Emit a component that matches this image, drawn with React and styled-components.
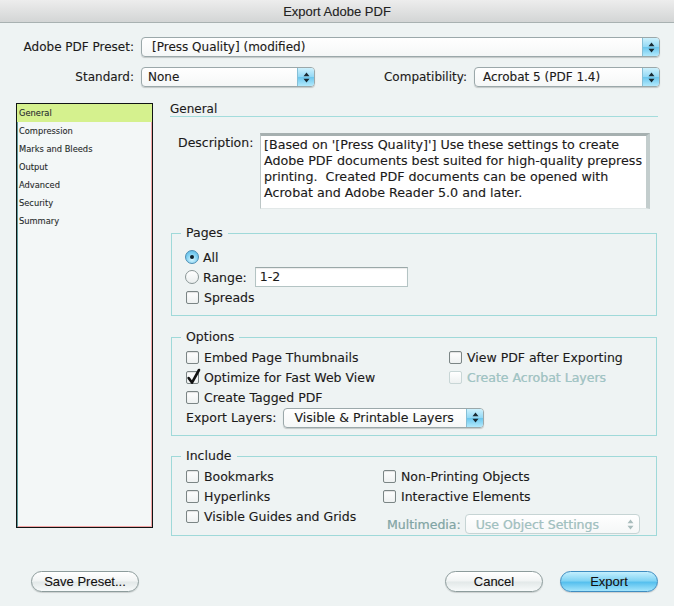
import React from "react";
import styled, { createGlobalStyle } from "styled-components";

const GlobalStyle = createGlobalStyle`
  html, body {
    margin: 0;
    padding: 0;
    background: #eef3f3;
  }
  body {
    font-family: "DejaVu Sans", "Noto Sans", sans-serif;
  }
`;

const aqua = "linear-gradient(#cdf1fd 0%, #94d9f5 48%, #6cc7ee 52%, #b2e9fc 100%)";

const Window = styled.div`
  width: 674px;
  height: 606px;
  display: flex;
  flex-direction: column;
  background: #eef3f3;
  color: #1b1b1b;
  font-size: 12px;
  overflow: hidden;
  text-shadow: 0.5px 0 0 rgba(220, 90, 90, 0.22), -0.5px 0 0 rgba(60, 170, 170, 0.22);
`;

const TitleBar = styled.div`
  height: 22px;
  flex: none;
  display: flex;
  align-items: center;
  justify-content: center;
  background: linear-gradient(#ededed, #d3d5d5);
  border-bottom: 1px solid #a8b1b1;
  font-family: "Liberation Sans", Arial, sans-serif;
  font-size: 13px;
  color: #222;
`;

const Top = styled.div`
  display: flex;
  flex-direction: column;
  gap: 10px;
  padding: 14px 14px 0 16px;
`;

const FieldRow = styled.div`
  display: flex;
  align-items: center;
  height: 20px;
`;

const Label = styled.span`
  flex: none;
  width: ${(p) => (p.$w ? `${p.$w}px` : "auto")};
  text-align: right;
  margin-right: ${(p) => (p.$gap != null ? p.$gap : 7)}px;
  white-space: nowrap;
  color: ${(p) => (p.$disabled ? "#7fa7a7" : "inherit")};
`;

const Spacer = styled.div`
  flex: 1;
`;

const PopupBox = styled.div`
  display: flex;
  align-items: center;
  box-sizing: border-box;
  height: 20px;
  flex: ${(p) => (p.$w ? "none" : 1)};
  width: ${(p) => (p.$w ? `${p.$w}px` : "auto")};
  border: 1px solid ${(p) => (p.$disabled ? "#c6d4d4" : "#9ba8aa")};
  border-radius: 4px;
  background: linear-gradient(#ffffff, #f5f7f7);
  box-shadow: ${(p) => (p.$disabled ? "none" : "0 1px 1px rgba(0,0,0,0.18)")};
  color: ${(p) => (p.$disabled ? "#9fc3c3" : "inherit")};
  overflow: hidden;
`;

const PopupText = styled.span`
  flex: 1;
  padding-left: ${(p) => p.$pl || 10}px;
  white-space: nowrap;
  overflow: hidden;
`;

const PopupArrows = styled.span`
  flex: none;
  align-self: stretch;
  width: 16px;
  display: flex;
  align-items: center;
  justify-content: center;
  background: ${(p) => (p.$disabled ? "transparent" : aqua)};
  border-left: 1px solid ${(p) => (p.$disabled ? "transparent" : "#86bfd6")};
`;

const Arrows = ({ color }) => (
  <svg width="7" height="11" viewBox="0 0 7 11">
    <path d="M3.5 0.5 L6.5 4.2 H0.5 Z M3.5 10.5 L6.5 6.8 H0.5 Z" fill={color} />
  </svg>
);

const Popup = ({ children, w, disabled, pl }) => (
  <PopupBox $w={w} $disabled={disabled}>
    <PopupText $pl={pl}>{children}</PopupText>
    <PopupArrows $disabled={disabled}>
      <Arrows color={disabled ? "#a9bcbc" : "#1a2a33"} />
    </PopupArrows>
  </PopupBox>
);

const Main = styled.div`
  display: flex;
  gap: 17px;
  padding: 16px 16px 0 16px;
`;

const SideList = styled.div`
  flex: none;
  width: 137px;
  height: 425px;
  box-sizing: border-box;
  border: 1px solid #101414;
  background: #f3f7f7;
  box-shadow: inset 1px 0 0 #5f9a9a, inset -1px -1px 0 #f2a4a4;
`;

const ListItem = styled.div`
  height: 18px;
  line-height: 18px;
  padding-left: 2px;
  font-size: 8.3px;
  color: #1c2a2a;
  background: ${(p) => (p.$active ? "#d5f18e" : "transparent")};
`;

const Panel = styled.div`
  flex: 1;
  display: flex;
  flex-direction: column;
  font-size: 12.5px;
`;

const PanelHeader = styled.div`
  height: 13px;
  line-height: 13px;
  font-size: 12px;
  border-bottom: 1px solid #a3dcdc;
`;

const DescRow = styled.div`
  display: flex;
  margin-top: 16px;
`;

const DescLabel = styled.div`
  flex: none;
  width: 82px;
  padding-left: 8px;
  padding-top: 2px;
  line-height: 16px;
`;

const DescBox = styled.div`
  width: 390px;
  height: 76px;
  box-sizing: border-box;
  background: #fff;
  border-top: 3px solid #a6b0b0;
  border-left: 1px solid #bcc6c6;
  border-right: 4px solid #c3cdcd;
  border-bottom: 1px solid #e2e8e8;
  padding: 1px 0 0 3px;
  line-height: 16px;
  font-size: 12.7px;
  white-space: nowrap;
`;

const Group = styled.fieldset`
  margin: ${(p) => p.$mt}px 1px 0 1px;
  padding: ${(p) => p.$pt}px 14px ${(p) => p.$pb}px 14px;
  border: 1px solid #9fd9d9;
  min-width: 0;
`;

const Legend = styled.legend`
  padding: 0 5px;
  margin-left: -5px;
  line-height: 16px;
  font-size: 12.5px;
`;

const Stack = styled.div`
  display: flex;
  flex-direction: column;
`;

const Grid = styled.div`
  display: grid;
  grid-template-columns: ${(p) => p.$cols};
  grid-auto-rows: 20px;
`;

const Item = styled.div`
  display: flex;
  align-items: center;
  height: ${(p) => p.$h || 20}px;
  white-space: nowrap;
  grid-column: ${(p) => p.$span || "auto"};
  margin-top: ${(p) => p.$mt || 0}px;
  padding-left: ${(p) => p.$pl || 0}px;
  color: ${(p) => (p.$disabled ? "#9dc6c6" : "inherit")};
`;

const Box = styled.span`
  flex: none;
  width: 13px;
  height: 13px;
  box-sizing: border-box;
  margin-right: 5px;
  border: 1px solid ${(p) => (p.$disabled ? "#c8d6d6" : "#7b8585")};
  border-radius: 2px;
  background: linear-gradient(#ffffff, #eef1f1);
  box-shadow: ${(p) => (p.$disabled ? "none" : "inset 0 1px 1px rgba(0,0,0,0.12)")};
  svg {
    display: block;
    overflow: visible;
  }
`;

const Radio = styled.span`
  flex: none;
  width: 14px;
  height: 14px;
  box-sizing: border-box;
  margin: 0 4px 0 -1px;
  border-radius: 50%;
  display: flex;
  align-items: center;
  justify-content: center;
  border: 1px solid ${(p) => (p.$on ? "#4b8db3" : "#8a9696")};
  background: ${(p) =>
    p.$on
      ? "radial-gradient(circle at 50% 70%, #d8f6ff 0%, #7fd0f2 55%, #57b4e0 100%)"
      : "linear-gradient(#ffffff, #eaeeee)"};
  &::after {
    content: "";
    display: ${(p) => (p.$on ? "block" : "none")};
    width: 4px;
    height: 4px;
    border-radius: 50%;
    background: #10202a;
  }
`;

const Check = ({ label, checked, disabled }) => (
  <Item $disabled={disabled}>
    <Box $disabled={disabled}>
      {checked && (
        <svg width="13" height="13" viewBox="0 0 13 13">
          <path
            d="M1.6 6 L5 10.6 L12 -2"
            fill="none"
            stroke="#111"
            strokeWidth="2.6"
            strokeLinecap="round"
            strokeLinejoin="round"
          />
        </svg>
      )}
    </Box>
    {label}
  </Item>
);

const TextField = styled.div`
  width: 153px;
  height: 20px;
  box-sizing: border-box;
  margin-left: 8px;
  padding-left: 4px;
  line-height: 18px;
  background: #fff;
  border: 1px solid #b4c4c4;
  border-top-color: #9aa8a8;
  box-shadow: inset 0 1px 1px rgba(0, 0, 0, 0.08);
`;

const ButtonRow = styled.div`
  margin-top: auto;
  display: flex;
  align-items: center;
  gap: 17px;
  padding: 0 16px 14px 31px;
`;

const Button = styled.button`
  width: ${(p) => p.$w}px;
  height: 21px;
  padding: 0;
  border-radius: 11px;
  font-family: "Liberation Sans", Arial, sans-serif;
  font-size: 13px;
  color: #111;
  text-shadow: inherit;
  border: 1px solid ${(p) => (p.$primary ? "#3f8dc1" : "#8d9c9c")};
  background: ${(p) =>
    p.$primary
      ? "linear-gradient(#c4effe 0%, #82d4f4 45%, #57c0ee 55%, #a3e5fc 100%)"
      : "linear-gradient(#ffffff 0%, #f1f4f4 48%, #e2e8e8 52%, #f7fafa 100%)"};
  box-shadow: 0 1px 1px rgba(0, 0, 0, 0.15);
`;

const sections = ["General", "Compression", "Marks and Bleeds", "Output", "Advanced", "Security", "Summary"];

export default function App() {
  return (
    <>
      <GlobalStyle />
      <Window>
        <TitleBar>Export Adobe PDF</TitleBar>

        <Top>
          <FieldRow>
            <Label $w={118}>Adobe PDF Preset:</Label>
            <Popup>[Press Quality] (modified)</Popup>
          </FieldRow>
          <FieldRow>
            <Label $w={118}>Standard:</Label>
            <Popup w={174} pl={6}>None</Popup>
            <Spacer />
            <Label>Compatibility:</Label>
            <Popup w={186} pl={8}>Acrobat 5 (PDF 1.4)</Popup>
          </FieldRow>
        </Top>

        <Main>
          <SideList>
            {sections.map((s, i) => (
              <ListItem key={s} $active={i === 0}>
                {s}
              </ListItem>
            ))}
          </SideList>

          <Panel>
            <PanelHeader>General</PanelHeader>

            <DescRow>
              <DescLabel>Description:</DescLabel>
              <DescBox>
                [Based on '[Press Quality]'] Use these settings to create
                <br />
                Adobe PDF documents best suited for high-quality prepress
                <br />
                printing.&nbsp; Created PDF documents can be opened with
                <br />
                Acrobat and Adobe Reader 5.0 and later.
              </DescBox>
            </DescRow>

            <Group $mt={16} $pt={6} $pb={8}>
              <Legend>Pages</Legend>
              <Stack>
                <Item>
                  <Radio $on />
                  All
                </Item>
                <Item>
                  <Radio />
                  Range:
                  <TextField>1-2</TextField>
                </Item>
                <Check label="Spreads" />
              </Stack>
            </Group>

            <Group $mt={13} $pt={2} $pb={8}>
              <Legend>Options</Legend>
              <Grid $cols="263px 1fr">
                <Check label="Embed Page Thumbnails" />
                <Check label="View PDF after Exporting" />
                <Check label="Optimize for Fast Web View" checked />
                <Check label="Create Acrobat Layers" disabled />
                <Check label="Create Tagged PDF" />
                <span />
                <Item $span="1 / 3" $h={21}>
                  <Label $gap={7}>Export Layers:</Label>
                  <Popup w={201}>Visible &amp; Printable Layers</Popup>
                </Item>
              </Grid>
            </Group>

            <Group $mt={12} $pt={2} $pb={9}>
              <Legend>Include</Legend>
              <Grid $cols="197px 1fr">
                <Check label="Bookmarks" />
                <Check label="Non-Printing Objects" />
                <Check label="Hyperlinks" />
                <Check label="Interactive Elements" />
                <Check label="Visible Guides and Grids" />
                <Item $mt={8} $pl={4}>
                  <Label $disabled $gap={4}>Multimedia:</Label>
                  <Popup w={175} disabled>Use Object Settings</Popup>
                </Item>
              </Grid>
            </Group>
          </Panel>
        </Main>

        <ButtonRow>
          <Button $w={108}>Save Preset...</Button>
          <Spacer />
          <Button $w={98}>Cancel</Button>
          <Button $w={98} $primary>
            Export
          </Button>
        </ButtonRow>
      </Window>
    </>
  );
}
